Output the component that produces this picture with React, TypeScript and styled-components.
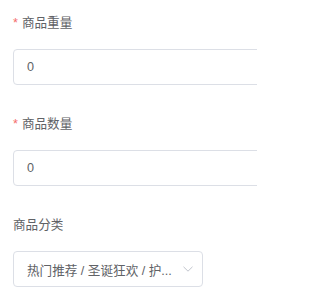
import styled, { createGlobalStyle } from "styled-components";

const GlobalStyle = createGlobalStyle`
  html, body {
    margin: 0;
    padding: 0;
    background: #fff;
    overflow: hidden;
  }
  body {
    font-family: "Liberation Sans", "Noto Sans CJK SC", sans-serif;
  }
`;

interface ItemProps {
  required?: boolean;
}

export default function App() {
  return (
    <>
      <GlobalStyle />
      <Form>
        <FormItem>
          <Label required>商品重量</Label>
          <Input defaultValue="0" />
        </FormItem>
        <FormItem>
          <Label required>商品数量</Label>
          <Input defaultValue="0" />
        </FormItem>
        <FormItem>
          <Label>商品分类</Label>
          <Select>
            <SelectText>热门推荐 / 圣诞狂欢 / 护...</SelectText>
            <Arrow viewBox="0 0 10 6" aria-hidden>
              <path d="M0.5 0.8 L5 5.2 L9.5 0.8" fill="none" stroke="#c0c4cc" strokeWidth="1" />
            </Arrow>
          </Select>
        </FormItem>
      </Form>
    </>
  );
}

const Form = styled.div`
  box-sizing: border-box;
  width: 257px;
  overflow: hidden;
  padding: 3px 0 0 13px;
`;

const FormItem = styled.div`
  margin-bottom: 19px;
`;

const Label = styled.div<ItemProps>`
  font-size: 12.6px;
  line-height: 36px;
  padding: 2px 0 8px;
  color: #606266;
  &::before {
    content: ${(p) => (p.required ? '"*"' : "none")};
    color: #f56c6c;
    margin-right: 4px;
  }
`;

const Input = styled.input`
  box-sizing: border-box;
  display: block;
  width: calc(100% + 40px);
  height: 36px;
  padding: 0 13px;
  border: 1px solid #dcdfe6;
  border-radius: 4px;
  font-family: inherit;
  font-size: 12.6px;
  color: #606266;
  outline: none;
`;

const Select = styled.div`
  box-sizing: border-box;
  display: flex;
  align-items: center;
  width: 190px;
  height: 36px;
  padding: 0 9px 0 13px;
  border: 1px solid #dcdfe6;
  border-radius: 4px;
`;

const SelectText = styled.span`
  flex: 1;
  font-size: 12.6px;
  color: #606266;
  white-space: nowrap;
  overflow: hidden;
`;

const Arrow = styled.svg`
  width: 10px;
  height: 6px;
`;
